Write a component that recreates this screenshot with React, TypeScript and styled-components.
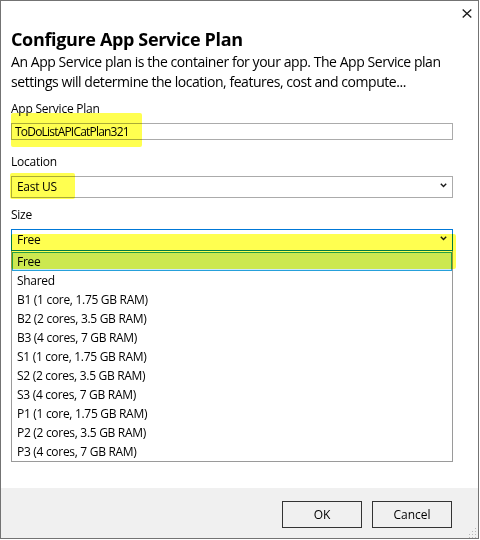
import styled, { createGlobalStyle } from 'styled-components';

const FONT = `"Open Sans", "Noto Sans", sans-serif`;

const GlobalStyle = createGlobalStyle`
  html, body {
    margin: 0;
    padding: 0;
    background: #ffffff;
  }
  body {
    font-family: ${FONT};
    color: #000000;
  }
  * {
    box-sizing: border-box;
  }
`;

const sizes = [
  'Free',
  'Shared',
  'B1 (1 core, 1.75 GB RAM)',
  'B2 (2 cores, 3.5 GB RAM)',
  'B3 (4 cores, 7 GB RAM)',
  'S1 (1 core, 1.75 GB RAM)',
  'S2 (2 cores, 3.5 GB RAM)',
  'S3 (4 cores, 7 GB RAM)',
  'P1 (1 core, 1.75 GB RAM)',
  'P2 (2 cores, 3.5 GB RAM)',
  'P3 (4 cores, 7 GB RAM)',
];

const Chevron = () => (
  <svg width="7" height="5" viewBox="0 0 7 5">
    <path d="M0.8 0.8 L3.5 3.6 L6.2 0.8" fill="none" stroke="#1a1a1a" strokeWidth="1.4" />
  </svg>
);

const CloseIcon = () => (
  <svg width="10" height="9" viewBox="0 0 10 9">
    <path d="M0.7 0.5 L9.3 8.5 M9.3 0.5 L0.7 8.5" stroke="#1a1a1a" strokeWidth="1.3" />
  </svg>
);

const Grip = () => (
  <svg width="10" height="10" viewBox="0 0 10 10">
    {[
      [8, 0],
      [8, 3],
      [5, 3],
      [8, 6],
      [5, 6],
      [2, 6],
      [8, 9],
      [5, 9],
      [2, 9],
    ].map(([x, y]) => (
      <rect key={`${x}-${y}`} x={x} y={y} width="1" height="1" fill="#b8b8b8" />
    ))}
  </svg>
);

const App = () => {
  return (
    <>
      <GlobalStyle />
      <Window>
        <TitleBar>
          <CloseButton>
            <CloseIcon />
          </CloseButton>
        </TitleBar>
        <Content>
          <Title>Configure App Service Plan</Title>
          <Description>
            An App Service plan is the container for your app. The App Service plan settings will
            determine the location, features, cost and compute...
          </Description>

          <Field $gap={14}>
            <Label>App Service Plan</Label>
            <TextBox>ToDoListAPICatPlan321</TextBox>
            <Marker $top={12} $left={0} $width={131} $height={34} />
          </Field>

          <Field $gap={9}>
            <Label>Location</Label>
            <Select>
              <span>East US</span>
              <Chevron />
            </Select>
            <Marker $top={19} $left={-1} $width={65} $height={26} />
          </Field>

          <Field $gap={0}>
            <Label>Size</Label>
            <Select $focused>
              <span>Free</span>
              <Chevron />
            </Select>
            <DropList>
              {sizes.map((s, i) => (
                <Option key={s} $selected={i === 0}>
                  {s}
                </Option>
              ))}
            </DropList>
            <Marker $top={27} $left={0} $width={445} $height={35} />
          </Field>
        </Content>
        <Footer>
          <Button>OK</Button>
          <Button>Cancel</Button>
          <GripCorner>
            <Grip />
          </GripCorner>
        </Footer>
      </Window>
    </>
  );
};

export default App;

const Window = styled.div`
  width: 479px;
  height: 539px;
  border: 1px solid #737373;
  background: #ffffff;
  display: flex;
  flex-direction: column;
`;

const TitleBar = styled.div`
  height: 26px;
  display: flex;
  justify-content: flex-end;
  align-items: flex-start;
  padding: 8px 6px 0 0;
`;

const CloseButton = styled.div`
  width: 10px;
  height: 9px;
  display: flex;
`;

const Content = styled.div`
  flex: 1;
  padding: 0 25px 0 10px;
  display: flex;
  flex-direction: column;
`;

const Title = styled.div`
  font-size: 18px;
  font-weight: 700;
  letter-spacing: -0.35px;
  line-height: 24px;
  margin-bottom: 1px;
`;

const Description = styled.div`
  font-size: 14px;
  letter-spacing: -0.45px;
  line-height: 19.5px;
  margin-bottom: 10px;
`;

const Field = styled.div<{ $gap: number }>`
  position: relative;
  display: flex;
  flex-direction: column;
  margin-bottom: ${(p) => p.$gap}px;
`;

const Label = styled.div`
  font-size: 12px;
  letter-spacing: -0.25px;
  line-height: 16px;
  margin-bottom: 6px;
`;

const TextBox = styled.div`
  height: 17px;
  border: 1px solid #ababab;
  padding: 0 3px;
  font-size: 12px;
  letter-spacing: -0.8px;
  line-height: 15px;
`;

const Select = styled.div<{ $focused?: boolean }>`
  height: 22px;
  border: 1px solid ${(p) => (p.$focused ? '#0078d7' : '#ababab')};
  padding: 0 5px;
  font-size: 12px;
  letter-spacing: -0.3px;
  line-height: 20px;
  display: flex;
  justify-content: space-between;
  align-items: flex-start;

  span {
    line-height: 20px;
  }

  svg {
    margin-top: 6px;
  }
`;

const DropList = styled.div`
  position: absolute;
  top: 44px;
  left: 0;
  right: 0;
  z-index: 1;
  background: #ffffff;
  border: 1px solid #9a9a9a;
  border-top: none;
  padding-top: 1px;
  display: flex;
  flex-direction: column;
`;

const Option = styled.div<{ $selected?: boolean }>`
  height: 19px;
  font-size: 12px;
  letter-spacing: -0.3px;
  line-height: ${(p) => (p.$selected ? '17px' : '19px')};
  padding-left: ${(p) => (p.$selected ? '4px' : '5px')};
  background: ${(p) => (p.$selected ? '#cce8ff' : 'transparent')};
  border: ${(p) => (p.$selected ? '1px solid #26a0da' : 'none')};
`;

const Marker = styled.div<{ $top: number; $left: number; $width: number; $height: number }>`
  position: absolute;
  top: ${(p) => p.$top}px;
  left: ${(p) => p.$left}px;
  width: ${(p) => p.$width}px;
  height: ${(p) => p.$height}px;
  z-index: 2;
  background: #ffff50;
  border-radius: 2px;
  mix-blend-mode: multiply;
  pointer-events: none;
`;

const Footer = styled.div`
  position: relative;
  height: 50px;
  background: #f0f0f0;
  display: flex;
  justify-content: flex-end;
  align-items: flex-start;
  gap: 10px;
  padding: 13px 26px 0 0;
`;

const Button = styled.div`
  width: 80px;
  height: 27px;
  border: 1px solid #333333;
  background: #f0f0f0;
  font-size: 12px;
  line-height: 25px;
  text-align: center;
`;

const GripCorner = styled.div`
  position: absolute;
  right: 1px;
  bottom: 0px;
  display: flex;
`;
